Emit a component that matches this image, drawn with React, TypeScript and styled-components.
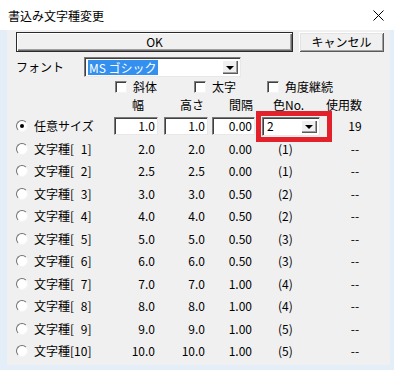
import React from 'react';
import styled, { createGlobalStyle } from 'styled-components';

const GlobalStyle = createGlobalStyle`
  html, body { margin: 0; padding: 0; background: #e4eef9; }
  body { font-family: "Noto Sans CJK JP", "Noto Sans", sans-serif; font-size: 12px; color: #000; }
  * { box-sizing: border-box; }
`;

const Window = styled.div`
  width: 394px;
  height: 370px;
  background: #e4eef9;
  display: flex;
  flex-direction: column;
`;

const TitleBar = styled.div`
  height: 30px;
  background: #ffffff;
  display: flex;
  align-items: center;
  justify-content: space-between;
  padding: 0 10px 0 8px;
`;

const Title = styled.span`
  font-size: 12px;
  line-height: 1;
  padding-top: 1px;
`;

const Frame = styled.div`
  flex: 1;
  padding: 0 4px 5px 7px;
  display: flex;
`;

const Body = styled.div`
  flex: 1;
  background: #f0f0f0;
  padding: 2px 6px 0 9px;
  display: flex;
  flex-direction: column;
`;

const ButtonRow = styled.div`
  display: flex;
  gap: 6px;
  height: 20px;
`;

const Button = styled.div<{ $w: number; $default?: boolean }>`
  width: ${p => p.$w}px;
  height: 20px;
  background: #f0f0f0;
  display: flex;
  align-items: center;
  justify-content: center;
  font-size: 12px;
  line-height: 1;
  border: ${p => (p.$default ? '1px solid #2b2b2b' : 'none')};
  box-shadow: ${p =>
    p.$default
      ? 'inset 1px 1px #ffffff, inset -1px -1px #6a6a6a, inset -2px -2px #a0a0a0'
      : 'inset 1px 1px #ffffff, inset -1px -1px #5a5a5a, inset 2px 2px #e3e3e3, inset -2px -2px #a0a0a0'};
`;

const FontRow = styled.div`
  display: flex;
  align-items: center;
  height: 22px;
  margin-top: 4px;
`;

const FieldLabel = styled.span`
  width: 68px;
  line-height: 1;
`;

const Combo = styled.div<{ $w: number; $h: number }>`
  width: ${p => p.$w}px;
  height: ${p => p.$h}px;
  background: #ffffff;
  border: 1px solid;
  border-color: #7a7a7a #e8e8e8 #e8e8e8 #7a7a7a;
  box-shadow: inset 1px 1px #404040;
  display: flex;
  align-items: center;
  justify-content: space-between;
  padding: 2px 2px 2px 3px;
`;

const HighlightOutline = styled.div`
  outline: 5px solid #e3212b;
  outline-offset: 1px;
  margin-left: 4px;
`;

const Selected = styled.span`
  background: #3390ef;
  color: #ffffff;
  line-height: 15px;
  height: 15px;
  padding: 0 1px 0 1px;
  font-size: 12px;
`;

const ComboValue = styled.span`
  line-height: 1;
  font-size: 12px;
  padding-left: 1px;
`;

const DropButton = styled.div`
  width: 16px;
  height: 100%;
  background: #f0f0f0;
  box-shadow: inset 1px 1px #ffffff, inset -1px -1px #5a5a5a, inset -2px -2px #a0a0a0;
  display: flex;
  align-items: center;
  justify-content: center;
`;

const Arrow = styled.span`
  width: 0;
  height: 0;
  border-left: 4px solid transparent;
  border-right: 4px solid transparent;
  border-top: 4px solid #000;
  margin-top: 1px;
`;

const CheckRow = styled.div`
  display: flex;
  align-items: center;
  height: 17px;
  padding-left: 99px;
`;

const CheckItem = styled.div<{ $w?: number }>`
  display: flex;
  align-items: center;
  gap: 6px;
  width: ${p => (p.$w ? `${p.$w}px` : 'auto')};
  line-height: 1;
`;

const CheckBox = styled.span`
  width: 12px;
  height: 12px;
  background: #ffffff;
  border: 1px solid;
  border-color: #808080 #f4f4f4 #f4f4f4 #808080;
  box-shadow: inset 1px 1px #404040;
`;

const COLS = '98px 50px 48px 46px 68px 58px';

const TableRow = styled.div<{ $h: number }>`
  display: grid;
  grid-template-columns: ${COLS};
  align-items: center;
  height: ${p => p.$h}px;
`;

const HeadCell = styled.span<{ $pl: number }>`
  padding-left: ${p => p.$pl}px;
  line-height: 1;
  white-space: nowrap;
`;

const LabelCell = styled.label`
  display: flex;
  align-items: center;
  gap: 6px;
  line-height: 1;
  white-space: pre;
`;

const Radio = styled.span<{ $on?: boolean }>`
  width: 12px;
  height: 12px;
  border-radius: 50%;
  background: #ffffff;
  border: 1px solid;
  border-color: #707070 #f4f4f4 #f4f4f4 #707070;
  display: flex;
  align-items: center;
  justify-content: center;
  &::after {
    content: '';
    width: 4px;
    height: 4px;
    border-radius: 50%;
    background: ${p => (p.$on ? '#000' : 'transparent')};
  }
`;

const Value = styled.span<{ $w: number; $input?: boolean }>`
  width: ${p => p.$w}px;
  height: 18px;
  display: flex;
  align-items: center;
  justify-content: flex-end;
  padding-right: 2px;
  line-height: 1;
  background: ${p => (p.$input ? '#ffffff' : 'transparent')};
  border: 1px solid;
  border-color: ${p => (p.$input ? '#7a7a7a #e8e8e8 #e8e8e8 #7a7a7a' : 'transparent')};
  box-shadow: ${p => (p.$input ? 'inset 1px 1px #404040' : 'none')};
`;

const ColorText = styled.span`
  padding-left: 20px;
  line-height: 1;
`;

const CountText = styled.span`
  text-align: center;
  line-height: 1;
`;

const CloseIcon = () => (
  <svg width="11" height="11" viewBox="0 0 11 11">
    <path d="M0.5 0.5 L10.5 10.5 M10.5 0.5 L0.5 10.5" stroke="#000" strokeWidth="1" fill="none" />
  </svg>
);

const rows = [
  { n: '[\u20071]', w: '2.0', h: '2.0', s: '0.00', c: '(1)' },
  { n: '[\u20072]', w: '2.5', h: '2.5', s: '0.00', c: '(1)' },
  { n: '[\u20073]', w: '3.0', h: '3.0', s: '0.50', c: '(2)' },
  { n: '[\u20074]', w: '4.0', h: '4.0', s: '0.50', c: '(2)' },
  { n: '[\u20075]', w: '5.0', h: '5.0', s: '0.50', c: '(3)' },
  { n: '[\u20076]', w: '6.0', h: '6.0', s: '0.50', c: '(3)' },
  { n: '[\u20077]', w: '7.0', h: '7.0', s: '1.00', c: '(4)' },
  { n: '[\u20078]', w: '8.0', h: '8.0', s: '1.00', c: '(4)' },
  { n: '[\u20079]', w: '9.0', h: '9.0', s: '1.00', c: '(5)' },
  { n: '[10]', w: '10.0', h: '10.0', s: '1.00', c: '(5)' },
];

export default function App() {
  return (
    <>
      <GlobalStyle />
      <Window>
        <TitleBar>
          <Title>書込み文字種変更</Title>
          <CloseIcon />
        </TitleBar>
        <Frame>
          <Body>
            <ButtonRow>
              <Button $w={277} $default>OK</Button>
              <Button $w={85}>キャンセル</Button>
            </ButtonRow>
            <FontRow>
              <FieldLabel>フォント</FieldLabel>
              <Combo $w={157} $h={20}>
                <Selected>MS ゴシック</Selected>
                <DropButton><Arrow /></DropButton>
              </Combo>
            </FontRow>
            <CheckRow>
              <CheckItem $w={79}><CheckBox />斜体</CheckItem>
              <CheckItem $w={73}><CheckBox />太字</CheckItem>
              <CheckItem><CheckBox />角度継続</CheckItem>
            </CheckRow>
            <TableRow $h={20}>
              <span />
              <HeadCell $pl={18}>幅</HeadCell>
              <HeadCell $pl={16}>高さ</HeadCell>
              <HeadCell $pl={17}>間隔</HeadCell>
              <HeadCell $pl={15}>色No.</HeadCell>
              <HeadCell $pl={0}>使用数</HeadCell>
            </TableRow>
            <TableRow $h={22.5}>
              <LabelCell><Radio $on />任意サイズ</LabelCell>
              <Value $w={44} $input>1.0</Value>
              <Value $w={44} $input>1.0</Value>
              <Value $w={43} $input>0.00</Value>
              <HighlightOutline>
                <Combo $w={58} $h={19}>
                  <ComboValue>2</ComboValue>
                  <DropButton><Arrow /></DropButton>
                </Combo>
              </HighlightOutline>
              <CountText>19</CountText>
            </TableRow>
            {rows.map(r => (
              <TableRow $h={22.5} key={r.n}>
                <LabelCell><Radio />文字種{r.n}</LabelCell>
                <Value $w={44}>{r.w}</Value>
                <Value $w={44}>{r.h}</Value>
                <Value $w={43}>{r.s}</Value>
                <ColorText>{r.c}</ColorText>
                <CountText>--</CountText>
              </TableRow>
            ))}
          </Body>
        </Frame>
      </Window>
    </>
  );
}
